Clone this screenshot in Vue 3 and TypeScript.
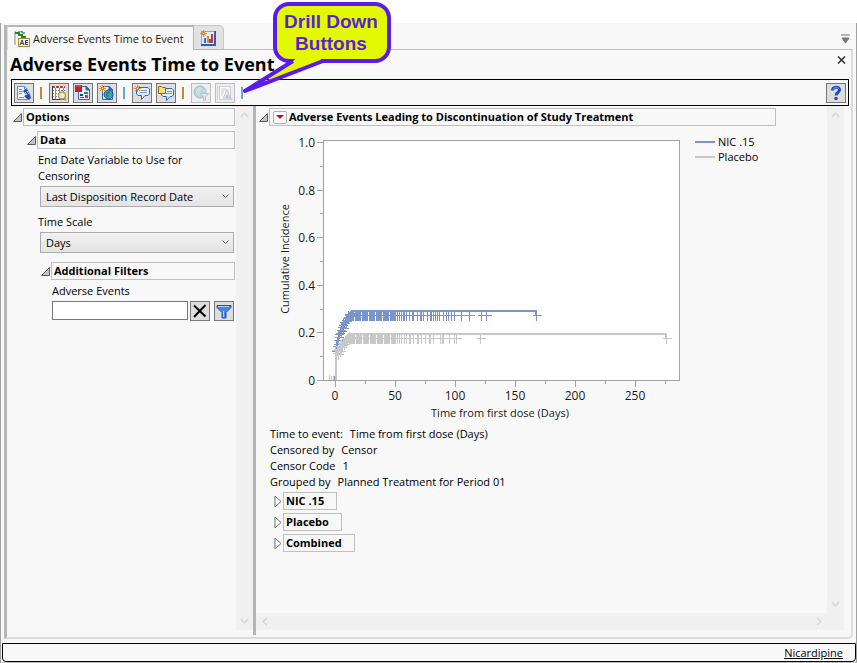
<script setup lang="ts">
import { ref } from 'vue'

type Mark = { x: number; y: number }

const endDate = ref('Last Disposition Record Date')
const timeScale = ref('Days')
const filterText = ref('')

const groups: string[] = ['NIC .15', 'Placebo', 'Combined']
const info: [string, string][] = [
  ['Time to event:', 'Time from first dose (Days)'],
  ['Censored by', 'Censor'],
  ['Censor Code', '1'],
  ['Grouped by', 'Planned Treatment for Period 01'],
]

// Chart geometry, in the chart's own units
const x0 = 65
const y0 = 248
const unitX = 1.2
const px = (days: number): number => Math.round(x0 + days * unitX)
const py = (value: number): number => Math.round(y0 - value * 238)

const yTicks = Array.from({ length: 11 }, (_, i) => ({
  y: py(i / 10),
  major: i % 2 === 0,
  label: i === 0 ? '0' : (i / 10).toFixed(1),
}))
const xTicks = Array.from({ length: 12 }, (_, i) => ({
  x: px(i * 25),
  major: i % 2 === 0,
  label: String(i * 25),
}))

// Censored subjects pile up early and thin out later
function denseRun(from: number, to: number, y: number): Mark[] {
  const out: Mark[] = []
  for (let x = from; x < to; x++) {
    if ((x - from) % 7 !== 6) out.push({ x, y })
  }
  return out
}
const at = (xs: number[], y: number): Mark[] => xs.map((x) => ({ x, y }))
const pairs = (list: number[][]): Mark[] => list.map(([x, y]) => ({ x, y }))

const blueMarks: Mark[] = [
  ...pairs([
    [65, 219], [66, 214], [67, 212], [67, 208], [68, 205], [68, 202], [69, 201], [70, 198], [71, 195],
    [71, 199], [72, 193], [73, 196], [73, 190], [74, 191], [75, 188], [76, 189], [76, 186], [77, 185],
    [78, 186], [78, 182], [80, 182], [82, 181], [79, 184],
  ]),
  ...denseRun(78, 126, 183),
  ...at([127, 129, 131, 133, 134, 136, 139, 142, 143, 147, 150, 151, 153, 157, 160, 161, 163, 165, 167, 169, 173, 176, 178, 181, 184, 191, 199, 211, 216, 266], 183),
]
const greyMarks: Mark[] = [
  ...pairs([
    [65, 218], [66, 221], [67, 217], [68, 222], [69, 214], [70, 219], [71, 211], [71, 215], [72, 213],
    [73, 209], [74, 212], [75, 207], [76, 210], [77, 206], [78, 205], [79, 203], [80, 205],
  ]),
  ...denseRun(79, 126, 206),
  ...at([127, 129, 131, 134, 136, 139, 140, 143, 147, 148, 151, 155, 159, 160, 163, 170, 172, 173, 179, 184, 186, 210, 396], 206),
]
const marksPath = (marks: Mark[]): string =>
  marks.map((m) => `M${m.x - 4} ${m.y}h9M${m.x} ${m.y - 4}v9`).join('')
</script>

<template>
  <div class="page">
    <div class="window">
      <header class="tabs">
        <button class="tab active" type="button">
          <svg class="icon" viewBox="0 0 16 16" aria-hidden="true">
            <path d="M1 0v14M1 2h5" stroke="#8a8a8a" fill="none" />
            <path d="M1 2h4v2h3v2h3v1" stroke="#16911f" stroke-width="2" fill="none" />
            <path d="M4 0h4v2h3" stroke="#26406e" fill="none" />
            <rect x="4.500" y="7.500" width="11" height="8" fill="#fdf3c4" stroke="#b08a2a" />
            <path d="M6 14l2-5 2 5M7 12.500h2M14 9.500h-2.500v4H14M11.500 11.500H14" stroke="#1d3fa8" fill="none" />
          </svg>
          <span>Adverse Events Time to Event</span>
        </button>
        <button class="tab second" type="button" aria-label="Results">
          <svg class="icon" viewBox="0 0 16 16" aria-hidden="true">
            <rect x="1" y="1" width="15" height="15" fill="#7fa5e2" />
            <rect x="2" y="2" width="12" height="12" fill="#e6effc" />
            <path d="M1 15h14V1" stroke="#2f5fb4" stroke-width="2" fill="none" />
            <path d="M4 8h2v5H4z" fill="#3a65c4" /><path d="M7 6h2v7H7z" fill="#d98a3a" />
            <path d="M9 9h2v4H9z" fill="#3a65c4" /><path d="M11 4h2v9h-2z" fill="#d03030" />
            <path d="M3.500 0v7M0 3.500h7M1 1l5 5M6 1L1 6" stroke="#e8892a" />
            <path d="M3 3h1v1H3z" fill="#fff" />
          </svg>
        </button>
        <div class="tab-rest">
          <svg class="menu-mark" viewBox="0 0 10 10" aria-hidden="true"><path d="M0 1h9M1 4h7L4.500 9z" stroke="#777" fill="#777" /></svg>
        </div>
      </header>

      <main class="document">
        <div class="title-row">
          <h1>Adverse Events Time to Event</h1>
          <button class="close" type="button" aria-label="Close">
            <svg viewBox="0 0 9 8" aria-hidden="true"><path d="M1 0.500l7 7M8 0.500l-7 7" stroke="#333" stroke-width="1.600" /></svg>
          </button>
        </div>

        <div class="toolbar">
          <button class="tool" type="button" aria-label="Report">
            <svg class="icon" viewBox="0 0 16 16" aria-hidden="true">
              <path d="M1.500 1.500h7l3 3v10h-10z" fill="#f4f8ff" stroke="#6c8cc2" />
              <path d="M8.500 1.500v3h3" fill="none" stroke="#6c8cc2" />
              <path d="M3 4.500h3M3 6.500h4M3 8.500h3M3 12.500h5" stroke="#7a8aa4" />
              <path d="M7 6l3-2 3 3 1 3 1 3-2 2-3-2-2-2 2-1z" fill="#2450a8" />
              <path d="M9 7l2 3M11 6l2 3" stroke="#c8dcfa" />
            </svg>
          </button>
          <i class="sep orange"></i>
          <button class="tool" type="button" aria-label="Table">
            <svg class="icon" viewBox="0 0 16 16" aria-hidden="true">
              <rect x="1" y="1" width="13" height="14" fill="#fff" />
              <path d="M1 2h13" stroke="#c83a3a" stroke-width="2" stroke-dasharray="3 1" />
              <path d="M4.500 3v12M8.500 3v12M12.500 3v12M1 5.500h13M1 8.500h13M1 11.500h13" stroke="#8a8a8a" stroke-dasharray="2 1" />
              <path d="M1 14.500h13M1.500 1v14" stroke="#3c3c3c" />
              <circle cx="11" cy="10.500" r="3.500" fill="#d8ecff" stroke="#c69a26" stroke-width="1.500" />
              <path d="M13 13l2 2" stroke="#c69a26" stroke-width="2" />
            </svg>
          </button>
          <button class="tool" type="button" aria-label="Subset">
            <svg class="icon" viewBox="0 0 16 16" aria-hidden="true">
              <path d="M3.500 1.500h8l3 3v10h-11z" fill="#e4eefc" stroke="#3564b8" />
              <path d="M11 1v4h4" fill="#3564b8" stroke="#3564b8" />
              <rect x="0" y="0" width="7" height="7" fill="#c81e28" /><path d="M1 1h5" stroke="#e76b6b" />
              <rect x="9" y="7" width="4" height="2" fill="#28944a" /><path d="M5 9h3v2H5z" fill="#223f80" />
              <path d="M5 12.500h4" stroke="#3564b8" /><rect x="10" y="10" width="3" height="3" fill="#b84550" />
            </svg>
          </button>
          <button class="tool" type="button" aria-label="Web report">
            <svg class="icon" viewBox="0 0 16 16" aria-hidden="true">
              <path d="M3.500 1.500h7l3 3v10h-10z" fill="#e4eefc" stroke="#3564b8" />
              <path d="M10 1v4h4" fill="#3564b8" stroke="#3564b8" />
              <circle cx="9.500" cy="9.500" r="4.500" fill="#4b9ad8" stroke="#1d4d9a" />
              <path d="M7 7l3-1 1 2-2 1 1 2-1 2-2-2zM12 9l1 1-1 2z" fill="#2c9448" />
              <path d="M3.500 0v7M0 3.500h7M1 1l5 5M6 1L1 6" stroke="#e8892a" /><path d="M3 3h1v1H3z" fill="#fff" />
            </svg>
          </button>
          <i class="sep blue"></i>
          <button class="tool" type="button" aria-label="Add note">
            <svg class="icon" viewBox="0 0 16 16" aria-hidden="true">
              <path d="M3 2.500h11l1.500 1.500v5L14 10.500h-3L7.500 14.500V10.500H4L2.500 9V4z" fill="#e4effd" stroke="#3466b5" />
              <path d="M7 5.500h6M6 7.500h7" stroke="#7c98c5" />
              <path d="M3.500 0v7M0 3.500h7M1 1l5 5M6 1L1 6" stroke="#e8892a" /><path d="M3 3h1v1H3z" fill="#fff" />
            </svg>
          </button>
          <button class="tool" type="button" aria-label="View notes">
            <svg class="icon" viewBox="0 0 16 16" aria-hidden="true">
              <path d="M4 3.500h10l1.500 1.500v5L14 11.500h-2L8.500 15.500V11.500H5L3.500 10z" fill="#e4effd" stroke="#3466b5" />
              <path d="M9 6.500h5M8 8.500h6" stroke="#7c98c5" />
              <path d="M.5 1.500h3l1 1h3v6h-7z" fill="#f9df78" stroke="#8d6b16" />
            </svg>
          </button>
          <i class="sep orange"></i>
          <button class="tool off" type="button" disabled aria-label="Filter map">
            <svg class="icon" viewBox="0 0 16 16" aria-hidden="true">
              <circle cx="7" cy="7" r="6" fill="#a9cfe8" stroke="#8ab2d0" />
              <path d="M3 4l4-2 3 2-3 2 1 2-3 3-2-3zM10 5l3 1-1 2z" fill="#c4e4cd" />
              <path d="M7 8.500h8.500L12.500 12v3.500h-2V12z" fill="#dfe5ed" stroke="#b0b6bf" />
            </svg>
          </button>
          <button class="tool off" type="button" disabled aria-label="Profile">
            <svg class="icon" viewBox="0 0 16 16" aria-hidden="true">
              <path d="M2.500 1.500h11v13h-11z" fill="#fafafa" stroke="#c3cad4" />
              <path d="M4 4h5M4 6h3M4 8h3M4 10h2M.5 1v14" stroke="#c3cad4" />
              <path d="M9 5h2v3l2 4 2 3M9 5v3l-3 5h8" fill="none" stroke="#a9b8cf" />
              <path d="M10 9l3 4H8z" fill="#a9bbd4" />
            </svg>
          </button>
          <i class="sep blue"></i>
          <button class="tool help" type="button" aria-label="Help">
            <svg class="icon" viewBox="0 0 16 16" aria-hidden="true">
              <path d="M4.500 5.500C4.500 1.500 11.500 1 11.500 5c0 2.500-3.500 2.500-3.500 5.500" fill="none" stroke="#1d4fbe" stroke-width="3" />
              <path d="M5 4.500C6 2 10 2 11 4" fill="none" stroke="#6d9bf0" />
              <circle cx="8" cy="13.500" r="1.800" fill="#1d4fbe" />
            </svg>
          </button>
        </div>

        <div class="panes">
          <section class="options">
            <div class="options-body">
              <div class="outline">
                <svg class="open" viewBox="0 0 9 9" aria-hidden="true"><path d="M.5 8.500h8v-8z" /></svg>
                <h2>Options</h2>
              </div>
              <div class="level">
                <div class="outline">
                  <svg class="open" viewBox="0 0 9 9" aria-hidden="true"><path d="M.5 8.500h8v-8z" /></svg>
                  <h2>Data</h2>
                </div>
                <div class="fields">
                  <label for="end-date">End Date Variable to Use for Censoring</label>
                  <div class="select">
                    <select id="end-date" v-model="endDate"><option>Last Disposition Record Date</option></select>
                    <svg viewBox="0 0 7 5" aria-hidden="true"><path d="M.5.5l3 3 3-3" /></svg>
                  </div>
                  <label for="time-scale">Time Scale</label>
                  <div class="select">
                    <select id="time-scale" v-model="timeScale"><option>Days</option></select>
                    <svg viewBox="0 0 7 5" aria-hidden="true"><path d="M.5.5l3 3 3-3" /></svg>
                  </div>
                </div>
                <div class="level inner">
                  <div class="outline">
                    <svg class="open" viewBox="0 0 9 9" aria-hidden="true"><path d="M.5 8.500h8v-8z" /></svg>
                    <h2>Additional Filters</h2>
                  </div>
                  <div class="filters">
                    <label for="events">Adverse Events</label>
                    <div class="filter-row">
                      <input id="events" v-model="filterText" type="text" />
                      <button class="tool clear" type="button" aria-label="Clear" @click="filterText = ''">
                        <svg class="icon" viewBox="0 0 16 16" aria-hidden="true"><path d="M2 2.500l11.500 11M13.500 2L2 14" stroke="#000" stroke-width="2" /></svg>
                      </button>
                      <button class="tool" type="button" aria-label="Filter">
                        <svg class="icon" viewBox="0 0 16 16" aria-hidden="true">
                          <path d="M1 2.500h14v2L10 9.500v5.500H6V9.500L1 4.500z" fill="#4585e4" stroke="#1d50ae" />
                          <path d="M2 3.500h11M7.500 8v6" stroke="#b5d3fb" />
                        </svg>
                      </button>
                    </div>
                  </div>
                </div>
              </div>
            </div>
            <div class="scroll vertical">
              <svg viewBox="0 0 9 6" aria-hidden="true"><path d="M1 5l3.500-4L8 5" /></svg>
              <svg viewBox="0 0 9 6" aria-hidden="true"><path d="M1 1l3.500 4L8 1" /></svg>
            </div>
          </section>
          <div class="divider"></div>

          <section class="report">
            <div class="report-main">
              <div class="report-body">
                <div class="outline">
                  <svg class="open" viewBox="0 0 9 9" aria-hidden="true"><path d="M.5 8.500h8v-8z" /></svg>
                  <h2 class="with-menu">
                    <button class="red-menu" type="button" aria-label="Report options">
                      <svg viewBox="0 0 8 4" aria-hidden="true"><path d="M0 0h8L4 4z" fill="#c40d14" /></svg>
                    </button>
                    <span>Adverse Events Leading to Discontinuation of Study Treatment</span>
                  </h2>
                </div>

                <div class="chart-row">
                  <svg class="chart" viewBox="0 0 412 292" role="img" aria-label="Cumulative incidence by days from first dose">
                    <g shape-rendering="crispEdges" fill="none">
                      <rect x="53.500" y="8.500" width="356" height="240" fill="#fff" stroke="#a3a3a3" />
                      <g stroke="#a3a3a3">
                        <path v-for="t in yTicks" :key="'y' + t.y" :d="`M${t.major ? 47 : 50} ${t.y + 0.5}H53`" />
                        <path v-for="t in xTicks" :key="'x' + t.x" :d="`M${t.x + 0.5} 249v${t.major ? 6 : 3}`" />
                      </g>
                      <path d="M66 248V220L68 206L72 196L76 188L82 179H266V183" stroke="#7b93cf" stroke-width="2" />
                      <g transform="translate(0.5 0.5)"><path :d="marksPath(blueMarks)" stroke="#7b93cf" /></g>
                      <path d="M66 248V225L69 217L74 208L79 202H396V206" stroke="#c8c8c8" stroke-width="2" />
                      <g transform="translate(0.5 0.5)"><path :d="marksPath(greyMarks)" stroke="#c8c8c8" /></g>
                      <path d="M59.500 243v5M61.500 244v4M63.500 244v4" stroke="#c8c8c8" />
                      <path d="M64.500 244v4" stroke="#7b93cf" />
                    </g>
                    <g class="axis-text">
                      <g class="numbers">
                        <template v-for="t in yTicks" :key="'yl' + t.y">
                          <text v-if="t.major" x="45" :y="t.y + 5" text-anchor="end">{{ t.label }}</text>
                        </template>
                        <template v-for="t in xTicks" :key="'xl' + t.x">
                          <text v-if="t.major" :x="t.x" y="268" text-anchor="middle">{{ t.label }}</text>
                        </template>
                      </g>
                      <text x="230" y="285" text-anchor="middle">Time from first dose (Days)</text>
                      <text transform="translate(19 127) rotate(-90)" text-anchor="middle">Cumulative Incidence</text>
                    </g>
                  </svg>
                  <ul class="legend">
                    <li><i class="line blue-line"></i>NIC .15</li>
                    <li><i class="line grey-line"></i>Placebo</li>
                  </ul>
                </div>

                <dl class="info">
                  <div v-for="[name, value] in info" :key="name"><dt>{{ name }}</dt><dd>{{ value }}</dd></div>
                </dl>
                <div class="groups">
                  <div v-for="g in groups" :key="g" class="outline">
                    <svg class="closed" viewBox="0 0 8 13" aria-hidden="true"><path d="M1 1v11l6-5.500z" /></svg>
                    <h2>{{ g }}</h2>
                  </div>
                </div>
              </div>
              <div class="scroll vertical">
                <svg viewBox="0 0 9 6" aria-hidden="true"><path d="M1 5l3.500-4L8 5" /></svg>
                <svg viewBox="0 0 9 6" aria-hidden="true"><path d="M1 1l3.500 4L8 1" /></svg>
              </div>
            </div>
            <div class="scroll horizontal">
              <svg viewBox="0 0 6 9" aria-hidden="true"><path d="M5 1L1 4.500 5 8" /></svg>
              <svg viewBox="0 0 6 9" aria-hidden="true"><path d="M1 1l4 3.500L1 8" /></svg>
            </div>
          </section>
        </div>
      </main>

      <footer class="status"><a href="#">Nicardipine</a></footer>
    </div>

    <div class="callout">
      <svg viewBox="0 0 150 96" aria-hidden="true">
        <rect x="32" y="3" width="114" height="57" rx="14" fill="#e3f900" stroke="#5b1aee" stroke-width="4" />
        <path d="M54 57h24v3L20 83z" fill="#e3f900" />
        <path d="M50 60L2 90L80 60" fill="none" stroke="#5b1aee" stroke-width="4" stroke-linejoin="round" />
      </svg>
      <p>Drill Down<br />Buttons</p>
    </div>
  </div>
</template>

<style>
body { margin: 0; background: #fff; }
</style>

<style scoped>
* { box-sizing: border-box; }
.page {
  position: relative;
  display: flex;
  min-height: 100vh;
  padding-top: 23px;
  font-family: "Open Sans", "Noto Sans", sans-serif;
  font-size: 11px;
  line-height: 16px;
  color: #000;
}
.window {
  display: flex;
  flex: 1;
  flex-direction: column;
  min-width: 0;
  padding-top: 2px;
  background: #f8f8f8;
  border-right: 1px solid #a0a0a0;
  border-left: 1px solid #a0a0a0;
  border-bottom: 1px solid #c0c0c0;
}
.tabs {
  display: flex;
  height: 25px;
  margin: 0 3px;
  border-left: 3px solid #b5b5b5;
}
.tab {
  display: flex;
  align-items: center;
  padding: 0 6px;
  font: inherit;
  color: #1a1a1a;
  background: #f8f8f8;
  border: 0;
}
.active {
  gap: 3px;
  width: 187px;
  border-top: 2px solid #b5b5b5;
  border-left: 1px solid #dcdcdc;
  border-right: 1px solid #b5b5b5;
  white-space: nowrap;
}
.second {
  width: 30px;
  background: #e2e2e2;
  border: 1px solid #c8c8c8;
  border-left: 0;
  border-bottom-color: #b5b5b5;
  border-radius: 0 5px 0 0;
}
.tab-rest {
  display: flex;
  flex: 1;
  justify-content: flex-end;
  padding: 9px 2px 0 0;
  border-bottom: 1px solid #bdbdbd;
}
.menu-mark { width: 10px; height: 10px; }
.icon { flex: none; width: 16px; height: 16px; }
.document {
  display: flex;
  flex: 1;
  flex-direction: column;
  margin: 0 3px;
  border: 2px solid #dcdcdc;
  border-top: 0;
  border-left: 3px solid #b5b5b5;
  border-radius: 0 0 5px 0;
}
.title-row {
  display: flex;
  align-items: flex-start;
  justify-content: space-between;
  height: 29px;
  padding: 2px 5px 0 3px;
}
h1 { margin: 0; font-size: 18px; line-height: 24px; font-weight: 700; }
.close { width: 9px; height: 8px; margin-top: 4px; padding: 0; background: none; border: 0; }
.close svg { display: block; width: 9px; height: 8px; }
.toolbar {
  display: flex;
  align-items: center;
  gap: 4px;
  height: 27px;
  margin: 0 2px 0 4px;
  padding: 0 2px;
  border: 1px solid #000;
}
.tool {
  display: flex;
  flex: none;
  align-items: center;
  justify-content: center;
  width: 20px;
  height: 20px;
  padding: 0;
  background: #dedede;
  border: 1px solid #767676;
}
.off { background: #eee; border-color: #bdbdbd; }
.off .icon { opacity: 0.8; }
.help { margin-left: auto; }
.sep { width: 2px; height: 12px; margin: 0 3px 0 2px; background: #c48a24; }
.sep.blue { background: #65a9da; }
.panes { display: flex; flex: 1; margin: 0 7px 2px 1px; }
.options { display: flex; width: 245px; margin-bottom: 5px; }
.options-body { flex: 1; min-width: 0; padding: 2px 1px 0 5px; }
.outline { display: flex; align-items: center; gap: 1px; }
.open { flex: none; width: 9px; height: 9px; }
.open path { fill: #c4c4c4; stroke: #5c5c5c; }
.closed { flex: none; width: 8px; height: 13px; }
.closed path { fill: #fff; stroke: #6f6f6f; }
h2 {
  display: flex;
  align-items: center;
  flex: 1;
  height: 18px;
  margin: 0;
  padding: 0 2px;
  font-size: 11px;
  line-height: 16px;
  font-weight: 700;
  white-space: nowrap;
  border: 1px solid #bfbfbf;
}
.level { margin: 5px 0 0 14px; }
.level.inner { margin-top: 0; }
.fields { display: flex; flex-direction: column; padding: 3px 1px 2px 11px; }
.select { position: relative; margin: 2px 0 7px 2px; }
.select select {
  display: block;
  width: 100%;
  height: 21px;
  padding: 0 5px;
  font: inherit;
  color: #000;
  appearance: none;
  background: linear-gradient(#f1f1f1, #e4e4e4);
  border: 1px solid #ababab;
  border-radius: 0;
}
.select svg { position: absolute; top: 8px; right: 5px; width: 7px; height: 5px; }
.select path { fill: none; stroke: #5a5a5a; }
.filters { padding: 3px 1px 0 11px; }
.filters label { display: block; }
.filter-row { display: flex; gap: 4px; margin-top: 2px; }
.filter-row input {
  flex: 1;
  min-width: 0;
  height: 19px;
  padding: 0 3px;
  font: inherit;
  background: #fff;
  border: 1px solid #777;
}
.filter-row .clear { margin-left: -2px; }
.scroll { display: flex; flex: none; align-items: center; justify-content: space-between; background: #f0f0f0; }
.scroll path { fill: none; stroke: #d6d6d6; stroke-width: 1.5; }
.vertical { flex-direction: column; width: 17px; padding: 6px 0; }
.vertical svg { width: 9px; height: 6px; }
.horizontal { height: 17px; padding: 0 22px 0 6px; }
.horizontal svg { width: 6px; height: 9px; }
.divider { width: 3px; background: #b5b5b5; }
.report { display: flex; flex: 1; flex-direction: column; min-width: 0; margin-bottom: 5px; }
.report-main { display: flex; flex: 1; }
.report-body { flex: 1; min-width: 0; padding: 2px 0 0 3px; }
.report-body > .outline { margin-right: 51px; }
.with-menu { gap: 2px; padding: 0 3px; }
.red-menu {
  display: flex;
  align-items: center;
  justify-content: center;
  width: 14px;
  height: 13px;
  padding: 0;
  background: #fff;
  border: 1px solid #b0b0b0;
  border-radius: 2px;
}
.red-menu svg { width: 8px; height: 4px; }
.chart-row { display: flex; align-items: flex-start; gap: 13px; padding: 6px 0 0 11px; }
.chart { flex: none; width: 412px; height: 292px; }
.axis-text { font-size: 11px; fill: #1a1a1a; }
.numbers { font-size: 12px; }
.legend { margin: 2px 0 0; padding: 0; list-style: none; line-height: 15px; }
.legend li { display: flex; align-items: center; gap: 3px; }
.line { width: 20px; height: 2px; }
.blue-line { background: #7b93cf; }
.grey-line { background: #c8c8c8; }
.info { margin: 2px 0 2px 11px; }
.info div { display: flex; gap: 7px; }
.info dt, .info dd { margin: 0; }
.groups { display: flex; flex-direction: column; align-items: flex-start; gap: 3px; padding-left: 15px; }
.groups h2 { padding-right: 12px; }
.status {
  display: flex;
  align-items: center;
  justify-content: flex-end;
  height: 19px;
  margin: 4px 0 0 1px;
  padding-right: 12px;
  border: 1px solid #000;
  border-radius: 0 0 4px 4px;
}
.status a { color: #000; }
.callout { position: absolute; top: 1px; left: 243px; width: 150px; height: 96px; }
.callout svg { position: absolute; inset: 0; width: 150px; height: 96px; }
.callout p {
  position: relative;
  margin: 10px 0 0 26px;
  font-family: "Liberation Sans", Arial, sans-serif;
  font-size: 19px;
  font-weight: 700;
  line-height: 22px;
  text-align: center;
  color: #5a1fd8;
}
</style>
